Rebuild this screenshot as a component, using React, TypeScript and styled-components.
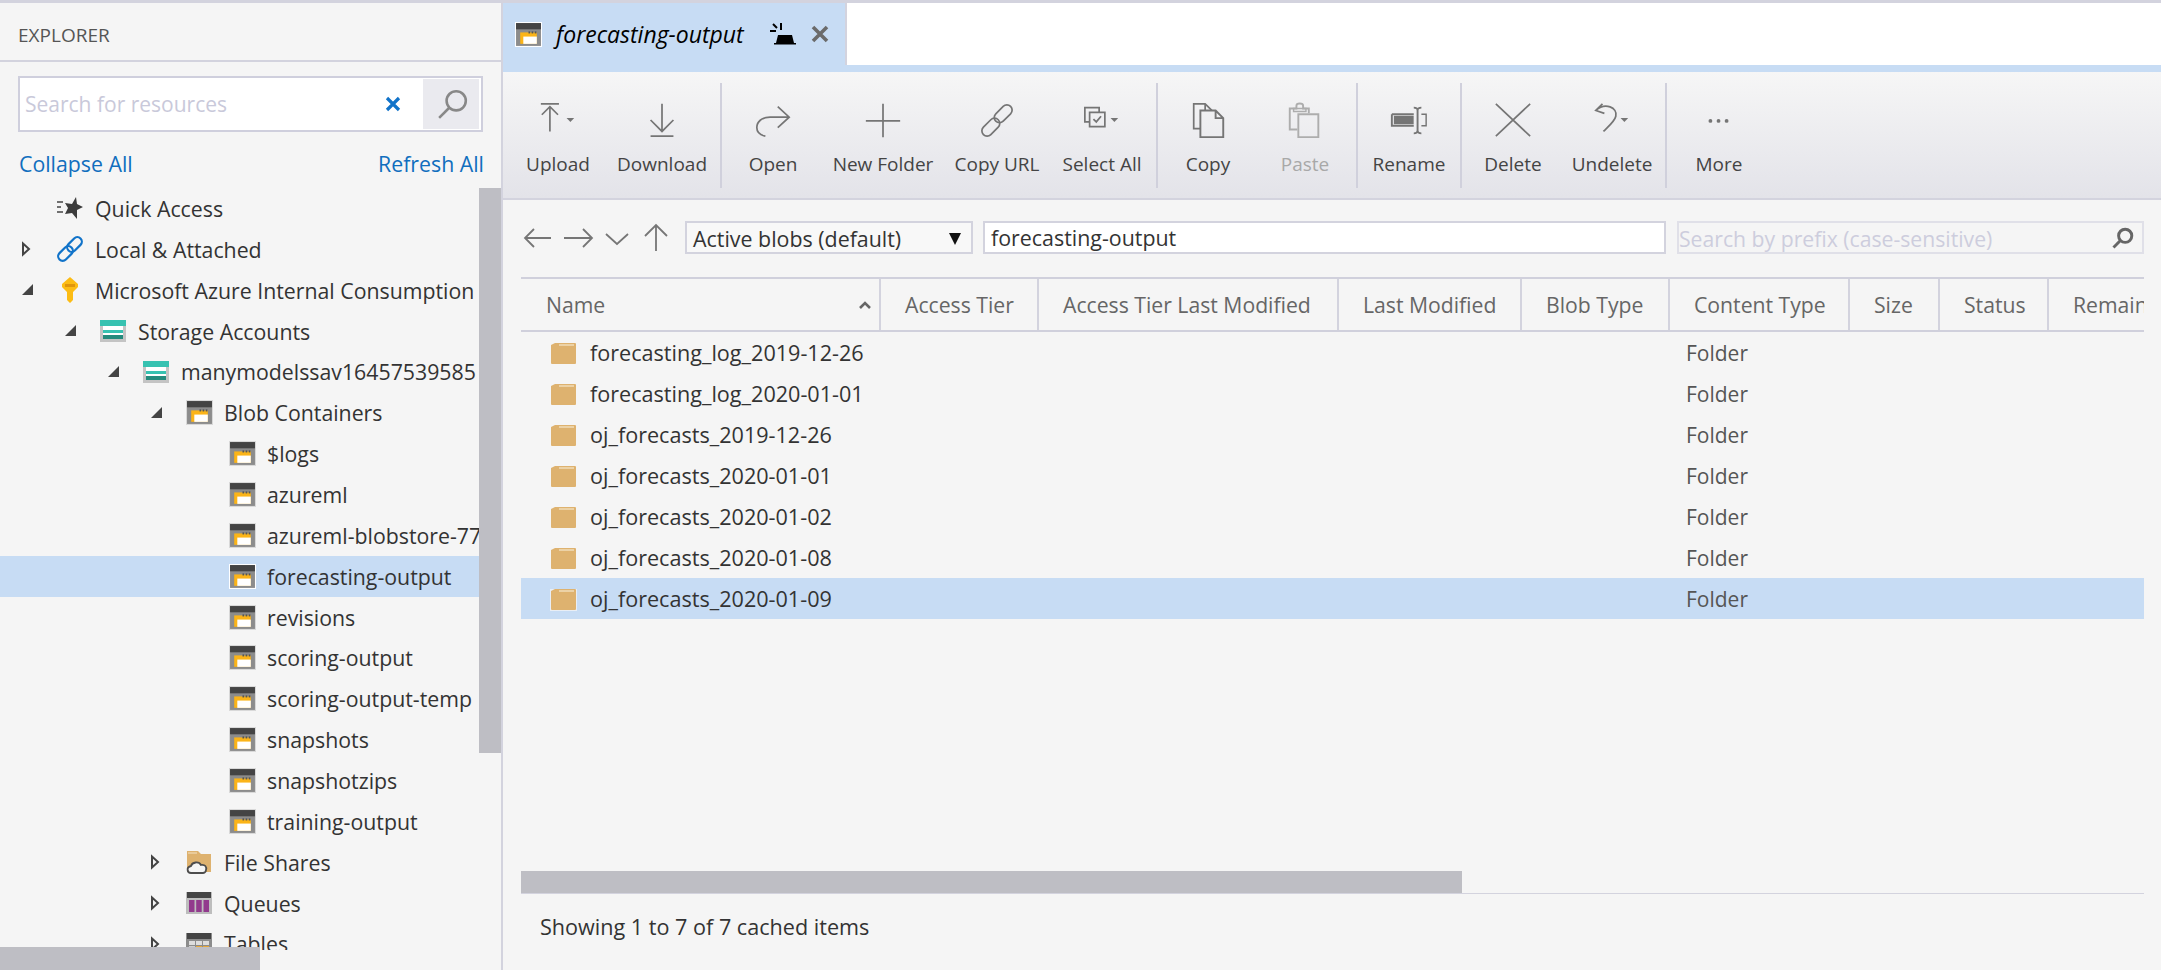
import React from 'react';
import styled, { createGlobalStyle } from 'styled-components';

const GlobalStyle = createGlobalStyle`
    html, body {
        margin: 0;
        padding: 0;
        height: 100%;
        background: #f5f5f5;
    }
    * {
        box-sizing: border-box;
    }
`;

const Page = styled.div`
    width: 2161px;
    height: 970px;
    display: flex;
    overflow: hidden;
    border-top: 3px solid #d3d3de;
    background: #f5f5f5;
    font-family: 'Open Sans', 'Noto Sans', sans-serif;
    font-size: 21.3px;
    color: #333;
`;

/* ---------- explorer ---------- */

const Sidebar = styled.aside`
    width: 503px;
    flex: none;
    height: 100%;
    display: flex;
    flex-direction: column;
    border-right: 2px solid #d3d3de;
    position: relative;
`;

const SidebarTitle = styled.div`
    height: 59px;
    padding: 19px 0 0 18px;
    font-size: 19px;
    line-height: 26px;
    color: #555;
    border-bottom: 2px solid #d3d3de;
    flex: none;
`;

const SearchBox = styled.div`
    margin: 14px 0 0 18px;
    width: 465px;
    height: 56px;
    flex: none;
    display: flex;
    background: #fff;
    border: 2px solid #cfcfdd;
`;

const SearchText = styled.div`
    flex: 1;
    padding-left: 5px;
    line-height: 52px;
    font-size: 21px;
    color: #c9c9da;
    position: relative;
`;

const ClearIcon = styled.svg`
    position: absolute;
    right: 22px;
    top: 18px;
`;

const SearchButton = styled.div`
    width: 56px;
    margin: 1px 2px 1px 0;
    padding-left: 4px;
    display: flex;
    align-items: center;
    justify-content: center;
    background: #eaeaef;
`;

const LinkBar = styled.div`
    display: flex;
    justify-content: space-between;
    width: 465px;
    margin: 17px 0 0 19px;
    flex: none;
    height: 30px;
    line-height: 30px;
    color: #106ebe;
`;

const Tree = styled.div`
    margin-top: 9px;
    flex: 1;
    overflow: hidden;
    margin-bottom: 20px;
`;

const TreeRow = styled.div<{ $level: number; $selected?: boolean }>`
    height: 40.87px;
    display: flex;
    align-items: center;
    padding-left: ${props => 18 + props.$level * 43}px;
    background: ${props => (props.$selected ? '#c7dcf4' : 'transparent')};
    white-space: nowrap;
`;

const ArrowSlot = styled.div`
    width: 39px;
    flex: none;
    display: flex;
    align-items: center;
`;

const IconSlot = styled.div`
    width: 26px;
    height: 26px;
    flex: none;
    margin-right: 12px;
    display: flex;
    align-items: center;
    justify-content: center;
`;

const VerticalThumb = styled.div`
    position: absolute;
    right: 0;
    top: 185px;
    width: 22px;
    height: 565px;
    background: #bebec4;
`;

const HorizontalThumb = styled.div`
    position: absolute;
    left: 0;
    bottom: 0;
    width: 260px;
    height: 23px;
    background: #bebec4;
`;

/* ---------- main ---------- */

const Main = styled.main`
    flex: 1;
    min-width: 0;
    display: flex;
    flex-direction: column;
`;

const TabStrip = styled.div`
    height: 69px;
    flex: none;
    display: flex;
    background: #fff;
    border-bottom: 7px solid #c7dcf4;
`;

const Tab = styled.div`
    width: 344px;
    display: flex;
    align-items: center;
    padding-left: 12px;
    background: #c7dcf4;
    color: #000;
    font-size: 23px;
    font-style: italic;
    border-right: 2px solid #d3d3de;
`;

const TabTitle = styled.span`
    margin: 0 24px 0 14px;
    width: 189px;
    white-space: nowrap;
`;

const Toolbar = styled.div`
    height: 128px;
    flex: none;
    display: flex;
    padding-left: 5px;
    background: linear-gradient(#f6f6f6, #e3e3e9);
    border-bottom: 2px solid #d3d3de;
`;

const ToolButton = styled.div<{ $width: number; $disabled?: boolean }>`
    width: ${props => props.$width}px;
    flex: none;
    display: flex;
    flex-direction: column;
    align-items: center;
    padding-top: 28px;
    color: ${props => (props.$disabled ? '#a8a8a8' : '#444')};
    font-size: 19px;
    line-height: 28px;
    white-space: nowrap;
    svg {
        margin-bottom: 10px;
        color: ${props => (props.$disabled ? '#adadad' : '#757575')};
    }
`;

const ToolDivider = styled.div<{ $left?: number }>`
    width: 2px;
    flex: none;
    margin: 11px 0 10px ${props => props.$left ?? 0}px;
    background: #d0d0dc;
`;

const Content = styled.div`
    flex: 1;
    min-height: 0;
    display: flex;
    flex-direction: column;
    padding: 0 17px 0 18px;
`;

const NavBar = styled.div`
    height: 77px;
    flex: none;
    display: flex;
    align-items: center;
    padding-bottom: 2px;
`;

const NavIcons = styled.div`
    width: 164px;
    flex: none;
    display: flex;
    color: #767676;
`;

const FilterSelect = styled.div`
    width: 288px;
    height: 33px;
    padding: 2px 10px 0 6px;
    margin-right: 10px;
    border: 2px solid #d3d3de;
    background: #f8f8f8;
    display: flex;
    align-items: center;
    justify-content: space-between;
    color: #333;
    font-size: 21.4px;
    flex: none;
`;

const PathInput = styled.div`
    width: 683px;
    height: 33px;
    padding-left: 6px;
    margin-right: 11px;
    border: 2px solid #d3d3de;
    background: #fff;
    line-height: 30px;
    font-size: 21.4px;
    flex: none;
`;

const PrefixSearch = styled.div`
    flex: 1;
    height: 33px;
    padding: 1px 8px 0 0;
    border: 2px solid #e0e0e8;
    display: flex;
    align-items: center;
    justify-content: space-between;
    color: #cdcddd;
    font-size: 21.2px;
    white-space: nowrap;
`;

const gridColumns = '358px 158px 300px 183px 148px 180px 90px 109px 1fr';

const HeaderRow = styled.div`
    display: grid;
    grid-template-columns: ${gridColumns};
    height: 55px;
    flex: none;
    border-top: 2px solid #d0d0dc;
    border-bottom: 2px solid #d0d0dc;
    color: #666;
    font-size: 21.2px;
    overflow: hidden;
`;

const HeaderCell = styled.div<{ $first?: boolean }>`
    display: flex;
    align-items: center;
    justify-content: space-between;
    padding: 0 ${props => (props.$first ? '7px' : '0')} 0 ${props => (props.$first ? '25px' : '24px')};
    border-left: ${props => (props.$first ? '0' : '2px solid #d3d3de')};
    white-space: nowrap;
`;

const BlobRow = styled.div<{ $selected?: boolean }>`
    display: grid;
    grid-template-columns: ${gridColumns};
    height: 41px;
    flex: none;
    align-items: center;
    background: ${props => (props.$selected ? '#c7dcf4' : 'transparent')};
    font-size: 21.6px;
`;

const NameCell = styled.div`
    grid-column: 1 / span 5;
    display: flex;
    align-items: center;
    gap: 13px;
    padding-left: 29px;
`;

const TypeCell = styled.div`
    grid-column: 6;
    padding-left: 18px;
    font-size: 21px;
    color: #555;
`;

const ScrollTrack = styled.div`
    margin-top: auto;
    height: 23px;
    flex: none;
    border-bottom: 1px solid #d3d3de;
`;

const ScrollThumb = styled.div`
    width: 941px;
    height: 22px;
    background: #bebec4;
`;

const StatusLine = styled.div`
    height: 76px;
    flex: none;
    padding: 18px 0 0 19px;
    line-height: 30px;
    font-size: 21.6px;
`;

/* ---------- drawings ---------- */

function Collapsed() {
    return (
        <svg width="14" height="16" viewBox="0 0 14 16">
            <path d="M5 2.5 L11 8 L5 13.5 Z" fill="none" stroke="#444" strokeWidth="2" />
        </svg>
    );
}

function Expanded() {
    return (
        <svg width="14" height="14" viewBox="0 0 14 14" style={{ marginLeft: 3 }}>
            <path d="M12 1 V12 H1 Z" fill="#444" />
        </svg>
    );
}

function ContainerIcon({ outlined }: { outlined?: boolean }) {
    return (
        <svg width="27" height="25" viewBox="0 0 26 24" style={{ flex: 'none' }}>
            <rect x="0" y="0" width="26" height="24" fill={outlined ? '#fff' : '#d8d8d8'} />
            <rect x="1" y="1" width="24" height="22" fill="#8c8c8c" />
            <rect x="1" y="1" width="24" height="6" fill="#444" />
            <path d="M5 10 H21 V21 H5 Z" fill="#fbb418" />
            <rect x="8" y="14" width="13" height="7" fill="#fff" />
            <rect x="13" y="9" width="1.6" height="2" fill="#555" />
            <rect x="16" y="9" width="1.6" height="2" fill="#555" />
            <rect x="19" y="9" width="1.6" height="2" fill="#555" />
        </svg>
    );
}

function StorageIcon() {
    return (
        <svg width="26" height="24" viewBox="0 0 26 24">
            <rect x="0" y="1" width="26" height="22" fill="#c4c4c4" />
            <rect x="0" y="1" width="26" height="6" fill="#37c2b1" />
            <rect x="3" y="7" width="20" height="4" fill="#fff" />
            <rect x="3" y="11" width="20" height="3" fill="#37c2b1" />
            <rect x="3" y="14" width="20" height="2" fill="#fff" />
            <rect x="3" y="16" width="20" height="4" fill="#258b7d" />
        </svg>
    );
}

function QuickAccessIcon() {
    return (
        <svg width="26" height="24" viewBox="0 0 26 24">
            <path d="M0 6 H6 M0 11 H4 M0 16 H6" stroke="#444" strokeWidth="1.6" />
            <path d="M19 1 L20 8 L26 11 L20 14 L20 23 L15 17 L8 18 L11 12 L8 7 L15 8 Z" fill="#3c3c3c" />
        </svg>
    );
}

function AttachedIcon() {
    return (
        <svg width="26" height="26" viewBox="0 0 26 26" fill="none" stroke="#1173c9" strokeWidth="2.2">
            <rect x="0" y="13" width="17" height="9" rx="4.5" transform="rotate(-45 8.5 17.5)" />
            <rect x="9" y="4" width="17" height="9" rx="4.5" transform="rotate(-45 17.5 8.5)" />
        </svg>
    );
}

function KeyIcon() {
    return (
        <svg width="18" height="26" viewBox="0 0 18 26">
            <path d="M9 0 L17 7 V10 L12 15 V23 L9 26 L6 23 V15 L1 10 V7 Z" fill="#fcbc14" />
            <rect x="4" y="7" width="10" height="3" fill="#e0960c" />
        </svg>
    );
}

function FileShareIcon() {
    return (
        <svg width="26" height="26" viewBox="0 0 26 26">
            <path d="M1 2 H12 L15 5 H25 V23 H1 Z" fill="#deb26f" />
            <path d="M2 4 H11" stroke="#f4e3c6" strokeWidth="1" />
            <path d="M5 24 C1 24 0 18 5 17 C6 13 13 12 15 16 C19 15 21 18 20 21 C20 23 18 24 17 24 Z" fill="#f5f5f5" stroke="#4d4d4d" strokeWidth="1.8" />
        </svg>
    );
}

function QueueIcon() {
    return (
        <svg width="26" height="24" viewBox="0 0 26 24">
            <rect x="0" y="1" width="26" height="22" fill="#bdbdbd" />
            <rect x="1" y="1" width="24" height="6" fill="#444" />
            <rect x="3" y="9" width="5.5" height="12" fill="#923a8d" />
            <rect x="10.2" y="9" width="5.5" height="12" fill="#923a8d" />
            <rect x="17.5" y="9" width="5.5" height="12" fill="#923a8d" />
        </svg>
    );
}

function TableIcon() {
    return (
        <svg width="26" height="24" viewBox="0 0 26 24">
            <rect x="0" y="1" width="26" height="22" fill="#8c8c8c" />
            <rect x="1" y="1" width="24" height="6" fill="#444" />
            <rect x="3" y="9" width="6" height="4" fill="#ddd" />
            <rect x="10" y="9" width="6" height="4" fill="#ddd" />
            <rect x="17" y="9" width="6" height="4" fill="#ddd" />
            <rect x="3" y="14" width="6" height="4" fill="#ccc" />
            <rect x="10" y="14" width="6" height="4" fill="#e8a838" />
            <rect x="17" y="14" width="6" height="4" fill="#e8a838" />
        </svg>
    );
}

function FolderIcon({ outlined }: { outlined?: boolean }) {
    return (
        <svg width="27" height="24" viewBox="0 0 27 24" style={{ flex: 'none' }}>
            {outlined && <path d="M0 2 H27 V24 H0 Z" fill="#e9eef5" />}
            <path d="M1 4 L5 2 H25 A1 1 0 0 1 26 3 V22 A1 1 0 0 1 25 23 H2 A1 1 0 0 1 1 22 Z" fill="#deb26f" />
            <path d="M9 4 H24" stroke="#f1dcb9" strokeWidth="1.5" />
        </svg>
    );
}

function Magnifier({ size, color, weight }: { size: number; color: string; weight: number }) {
    return (
        <svg width={size} height={size} viewBox="0 0 30 30" fill="none" stroke={color} strokeWidth={weight}>
            <circle cx="18" cy="12" r="9" />
            <path d="M11.5 18.5 L2 28" />
        </svg>
    );
}

const Caret = () => <path d="M34 19 H42 L38 23 Z" fill="currentColor" stroke="none" />;

const toolIcons: Record<string, React.ReactNode> = {
    Upload: (
        <>
            <path d="M7 4 H26 M16.5 8 V33 M8 15.5 L16.5 7 L25 15.5" />
            <Caret />
        </>
    ),
    Download: <path d="M25 4 V32 M13 21 L25 33 L37 21 M13 38 H37" />,
    Open: <path d="M30 7 L42 18 L30 29 M42 18 H22 C13 18 8 23 8 29 C8 34 12 37 17 38" />,
    'New Folder': <path d="M7 22 H43 M25 4 V39" />,
    'Copy URL': (
        <>
            <rect x="20.5" y="9" width="22" height="11" rx="5.5" transform="rotate(-45 31.5 14.5)" />
            <rect x="7.5" y="23" width="22" height="11" rx="5.5" transform="rotate(-45 18.5 28.5)" />
        </>
    ),
    'Select All': (
        <>
            <path d="M12 23 H7 V8 H22 V13" />
            <path d="M12 13 H28 V28 H12 Z" />
            <path d="M16 20 L19 23 L24 17" />
            <Caret />
        </>
    ),
    Copy: (
        <>
            <path d="M17 30 H10 V4 H22 L29 11 M22 4 V11" />
            <path d="M17 11 H33 L41 19 V39 H17 Z M33 11 V19 H41" strokeWidth="2" />
        </>
    ),
    Paste: (
        <>
            <path d="M17 31 H9 V9 H16 V6 C16 3 23 3 23 6 V9 H29 V14" strokeWidth="2" />
            <path d="M13 9 H26 V12 H13 Z" strokeWidth="1.5" />
            <path d="M18 15 H39 V39 H18 Z" strokeWidth="2" />
        </>
    ),
    Rename: (
        <>
            <path d="M7 15 H30 M30 27 H7 V15" strokeWidth="2" />
            <rect x="10" y="17.5" width="19" height="7" fill="currentColor" />
            <path d="M38 15 H43 V27 H38" strokeWidth="1.5" />
            <path d="M30 8 C33 8 34 9 34 11 V32 C34 34 33 35 30 35 M38 8 C35 8 34 9 34 11 M38 35 C35 35 34 34 34 32" strokeWidth="2" />
        </>
    ),
    Delete: <path d="M7 4 L43 38 M43 4 L7 38" />,
    Undelete: (
        <>
            <path d="M15 4 L8 11 L17 14 M8 11 C18 2 31 8 29 17 C28 22 22 27 16 33" />
            <Caret />
        </>
    ),
    More: (
        <>
            <circle cx="16" cy="22" r="2" fill="currentColor" stroke="none" />
            <circle cx="24.5" cy="22" r="2" fill="currentColor" stroke="none" />
            <circle cx="33" cy="22" r="2" fill="currentColor" stroke="none" />
        </>
    ),
};

function ToolIcon({ name }: { name: string }) {
    return (
        <svg width="50" height="40" viewBox="0 0 50 42" fill="none" stroke="currentColor" strokeWidth="1.8">
            {toolIcons[name]}
        </svg>
    );
}

function Button({ name, width, disabled }: { name: string; width: number; disabled?: boolean }) {
    return (
        <ToolButton $width={width} $disabled={disabled}>
            <ToolIcon name={name} />
            {name}
        </ToolButton>
    );
}

type Node = { label: string; level: number; arrow?: 'open' | 'closed'; icon: React.ReactNode; selected?: boolean };

const leaf = (label: string, selected?: boolean): Node => ({
    label,
    level: 4,
    selected,
    icon: <ContainerIcon outlined={selected} />,
});

const nodes: Node[] = [
    { label: 'Quick Access', level: 0, icon: <QuickAccessIcon /> },
    { label: 'Local & Attached', level: 0, arrow: 'closed', icon: <AttachedIcon /> },
    { label: 'Microsoft Azure Internal Consumption', level: 0, arrow: 'open', icon: <KeyIcon /> },
    { label: 'Storage Accounts', level: 1, arrow: 'open', icon: <StorageIcon /> },
    { label: 'manymodelssav16457539585', level: 2, arrow: 'open', icon: <StorageIcon /> },
    { label: 'Blob Containers', level: 3, arrow: 'open', icon: <ContainerIcon /> },
    leaf('$logs'),
    leaf('azureml'),
    leaf('azureml-blobstore-77'),
    leaf('forecasting-output', true),
    leaf('revisions'),
    leaf('scoring-output'),
    leaf('scoring-output-temp'),
    leaf('snapshots'),
    leaf('snapshotzips'),
    leaf('training-output'),
    { label: 'File Shares', level: 3, arrow: 'closed', icon: <FileShareIcon /> },
    { label: 'Queues', level: 3, arrow: 'closed', icon: <QueueIcon /> },
    { label: 'Tables', level: 3, arrow: 'closed', icon: <TableIcon /> },
];

const blobs = [
    'forecasting_log_2019-12-26',
    'forecasting_log_2020-01-01',
    'oj_forecasts_2019-12-26',
    'oj_forecasts_2020-01-01',
    'oj_forecasts_2020-01-02',
    'oj_forecasts_2020-01-08',
    'oj_forecasts_2020-01-09',
];

const columns = ['Access Tier', 'Access Tier Last Modified', 'Last Modified', 'Blob Type', 'Content Type', 'Size', 'Status', 'Remain'];

export default function App() {
    return (
        <Page>
            <GlobalStyle />
            <Sidebar>
                <SidebarTitle>EXPLORER</SidebarTitle>
                <SearchBox>
                    <SearchText>
                        Search for resources
                        <ClearIcon width="16" height="16" viewBox="0 0 16 16">
                            <path d="M2 2 L14 14 M14 2 L2 14" stroke="#1173c9" strokeWidth="3.2" />
                        </ClearIcon>
                    </SearchText>
                    <SearchButton>
                        <Magnifier size={32} color="#888" weight={2.4} />
                    </SearchButton>
                </SearchBox>
                <LinkBar>
                    <span>Collapse All</span>
                    <span>Refresh All</span>
                </LinkBar>
                <Tree>
                    {nodes.map(node => (
                        <TreeRow key={node.label} $level={node.level} $selected={node.selected}>
                            <ArrowSlot>
                                {node.arrow === 'closed' && <Collapsed />}
                                {node.arrow === 'open' && <Expanded />}
                            </ArrowSlot>
                            <IconSlot>{node.icon}</IconSlot>
                            {node.label}
                        </TreeRow>
                    ))}
                </Tree>
                <VerticalThumb />
                <HorizontalThumb />
            </Sidebar>
            <Main>
                <TabStrip>
                    <Tab>
                        <ContainerIcon outlined />
                        <TabTitle>forecasting-output</TabTitle>
                        <svg width="28" height="22" viewBox="0 0 28 22">
                            <path d="M7 20 L9 12 H23 L25 20 H27 V21.5 H5 V20 Z" fill="#000" />
                            <path d="M12 0 V7 M1 8 H7 M4 1 L8 5" stroke="#000" strokeWidth="2" />
                        </svg>
                        <svg width="18" height="18" viewBox="0 0 18 18" style={{ marginLeft: 14 }}>
                            <path d="M2 2 L16 16 M16 2 L2 16" stroke="#6b6b6b" strokeWidth="3.6" />
                        </svg>
                    </Tab>
                </TabStrip>
                <Toolbar>
                    <Button name="Upload" width={100} />
                    <Button name="Download" width={108} />
                    <ToolDivider $left={4} />
                    <Button name="Open" width={102} />
                    <Button name="New Folder" width={118} />
                    <Button name="Copy URL" width={110} />
                    <Button name="Select All" width={100} />
                    <ToolDivider $left={4} />
                    <Button name="Copy" width={100} />
                    <Button name="Paste" width={94} disabled />
                    <ToolDivider $left={4} />
                    <Button name="Rename" width={102} />
                    <ToolDivider />
                    <Button name="Delete" width={102} />
                    <Button name="Undelete" width={96} />
                    <ToolDivider $left={5} />
                    <Button name="More" width={104} />
                </Toolbar>
                <Content>
                    <NavBar>
                        <NavIcons>
                            <svg width="152" height="30" viewBox="0 0 152 30" fill="none" stroke="currentColor" strokeWidth="1.8">
                                <path d="M4 15 H30 M13 6 L4 15 L13 24" />
                                <path d="M43 15 H71 M62 6 L71 15 L62 24" />
                                <path d="M85 11 L96 21 L107 11" />
                                <path d="M135 2 V28 M124 13 L135 2 L146 13" />
                            </svg>
                        </NavIcons>
                        <FilterSelect>
                            Active blobs (default)
                            <svg width="12" height="14" viewBox="0 0 12 14">
                                <path d="M0 1 H12 L6 13 Z" fill="#111" />
                            </svg>
                        </FilterSelect>
                        <PathInput>forecasting-output</PathInput>
                        <PrefixSearch>
                            <span>Search by prefix (case-sensitive)</span>
                            <Magnifier size={22} color="#666" weight={4} />
                        </PrefixSearch>
                    </NavBar>
                    <HeaderRow>
                        <HeaderCell $first>
                            Name
                            <svg width="14" height="10" viewBox="0 0 14 10">
                                <path d="M2 8 L7 3 L12 8" fill="none" stroke="#666" strokeWidth="2.6" />
                            </svg>
                        </HeaderCell>
                        {columns.map(column => (
                            <HeaderCell key={column}>{column}</HeaderCell>
                        ))}
                    </HeaderRow>
                    {blobs.map((blob, index) => (
                        <BlobRow key={blob} $selected={index === blobs.length - 1}>
                            <NameCell>
                                <FolderIcon outlined={index === blobs.length - 1} />
                                {blob}
                            </NameCell>
                            <TypeCell>Folder</TypeCell>
                        </BlobRow>
                    ))}
                    <ScrollTrack>
                        <ScrollThumb />
                    </ScrollTrack>
                    <StatusLine>Showing 1 to 7 of 7 cached items</StatusLine>
                </Content>
            </Main>
        </Page>
    );
}
